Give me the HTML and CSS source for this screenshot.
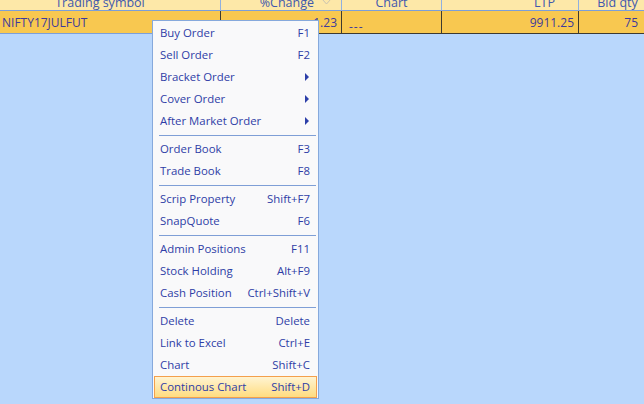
FILE: index.html
```html
<!DOCTYPE html>
<html>
<head>
<meta charset="utf-8">
<link rel="stylesheet" href="styles.css">
</head>
<body>
<div class="grid">
  <div class="hcell h-sym">Trading symbol</div>
  <div class="hcell h-chg">%Change<svg class="sort" width="9" height="6" viewBox="0 0 9 6"><path d="M0.5 0.5 L4.5 5 L8.5 0.5" fill="none" stroke="#c9c2b0" stroke-width="1"/></svg></div>
  <div class="hcell h-chart">Chart</div>
  <div class="hcell h-ltp">LTP</div>
  <div class="hcell h-bid">Bid qty</div>

  <div class="cell c-sym">NIFTY17JULFUT</div>
  <div class="cell c-num">1.23</div>
  <div class="cell c-chart">---</div>
  <div class="cell c-num">9911.25</div>
  <div class="cell c-num c-last">75</div>
</div>

<div class="menu">
  <div class="item"><span>Buy Order</span><span>F1</span></div>
  <div class="item"><span>Sell Order</span><span>F2</span></div>
  <div class="item"><span>Bracket Order</span><span class="arrow"></span></div>
  <div class="item"><span>Cover Order</span><span class="arrow"></span></div>
  <div class="item"><span>After Market Order</span><span class="arrow"></span></div>
  <div class="sep"></div>
  <div class="item"><span>Order Book</span><span>F3</span></div>
  <div class="item"><span>Trade Book</span><span>F8</span></div>
  <div class="sep"></div>
  <div class="item"><span>Scrip Property</span><span>Shift+F7</span></div>
  <div class="item"><span>SnapQuote</span><span>F6</span></div>
  <div class="sep"></div>
  <div class="item"><span>Admin Positions</span><span>F11</span></div>
  <div class="item"><span>Stock Holding</span><span>Alt+F9</span></div>
  <div class="item"><span>Cash Position</span><span>Ctrl+Shift+V</span></div>
  <div class="sep"></div>
  <div class="item"><span>Delete</span><span>Delete</span></div>
  <div class="item"><span>Link to Excel</span><span>Ctrl+E</span></div>
  <div class="item"><span>Chart</span><span>Shift+C</span></div>
  <div class="item active"><span>Continous Chart</span><span>Shift+D</span></div>
</div>
</body>
</html>
```
FILE: styles.css
```css
html, body {
  margin: 0;
  padding: 0;
  background: #b9d7fc;
  font-family: "Open Sans", "Noto Sans", sans-serif;
  font-size: 11px;
  overflow: hidden;
}
.grid {
  display: grid;
  grid-template-columns: 221px 121px 100px 137px 65px;
  margin-top: -9px;
}
.hcell {
  height: 20px;
  box-sizing: border-box;
  background: #fde8a8;
  color: #4158ad;
  border-right: 1px solid #8fb0e0;
  border-bottom: 1px solid #7c9fd8;
  font-size: 12.5px;
  line-height: 14px;
  padding-top: 5px;
  white-space: nowrap;
  display: flex;
  align-items: flex-start;
}
.h-sym { justify-content: center; padding-right: 20px; }
.h-chg { justify-content: flex-end; padding-right: 10px; gap: 8px; }
.h-chart { justify-content: center; }
.h-ltp { justify-content: flex-end; padding-right: 23px; }
.h-bid { justify-content: center; padding-left: 12px; border-right: none; }
.sort { margin-top: 3px; }
.cell {
  height: 23px;
  box-sizing: border-box;
  background: #f8c850;
  color: #3d3a9c;
  border-right: 1px solid #3d3a30;
  border-bottom: 1px solid #3d3a30;
  font-size: 12px;
  line-height: 20px;
  padding-top: 2px;
  white-space: nowrap;
  overflow: hidden;
}
.c-sym { padding-left: 2px; border-bottom-color: #7c9fd8; }
.c-num { text-align: right; padding-right: 4px; }
.c-chart { padding-left: 7px; padding-top: 6px; letter-spacing: 1px; }
.c-last { border-right: none; padding-right: 6px; }

.menu {
  position: absolute;
  left: 152px;
  top: 20px;
  width: 167px;
  box-sizing: border-box;
  background: #f9f9fa;
  border: 1px solid #86a9dc;
  padding: 1px 0 0 0;
  color: #2e3da6;
  font-size: 11.4px;
}
.item {
  height: 22px;
  margin: 0 1px;
  box-sizing: border-box;
  display: flex;
  justify-content: space-between;
  align-items: center;
  padding: 0 6px 2px 5px;
  white-space: nowrap;
  border: 1px solid transparent;
}
.item.active {
  border-color: #f4a04c;
  background: linear-gradient(#fff4d2, #ffdc80);
}
.arrow {
  width: 0;
  height: 0;
  border-top: 4px solid transparent;
  border-bottom: 4px solid transparent;
  border-left: 4px solid #2c3fa8;
  margin-right: 1px;
  margin-top: 2px;
}
.sep {
  height: 6px;
  display: flex;
  align-items: center;
  padding: 0 2px 0 6px;
}
.sep::before {
  content: "";
  flex: 1;
  height: 1px;
  background: #7f9fd6;
}
```
